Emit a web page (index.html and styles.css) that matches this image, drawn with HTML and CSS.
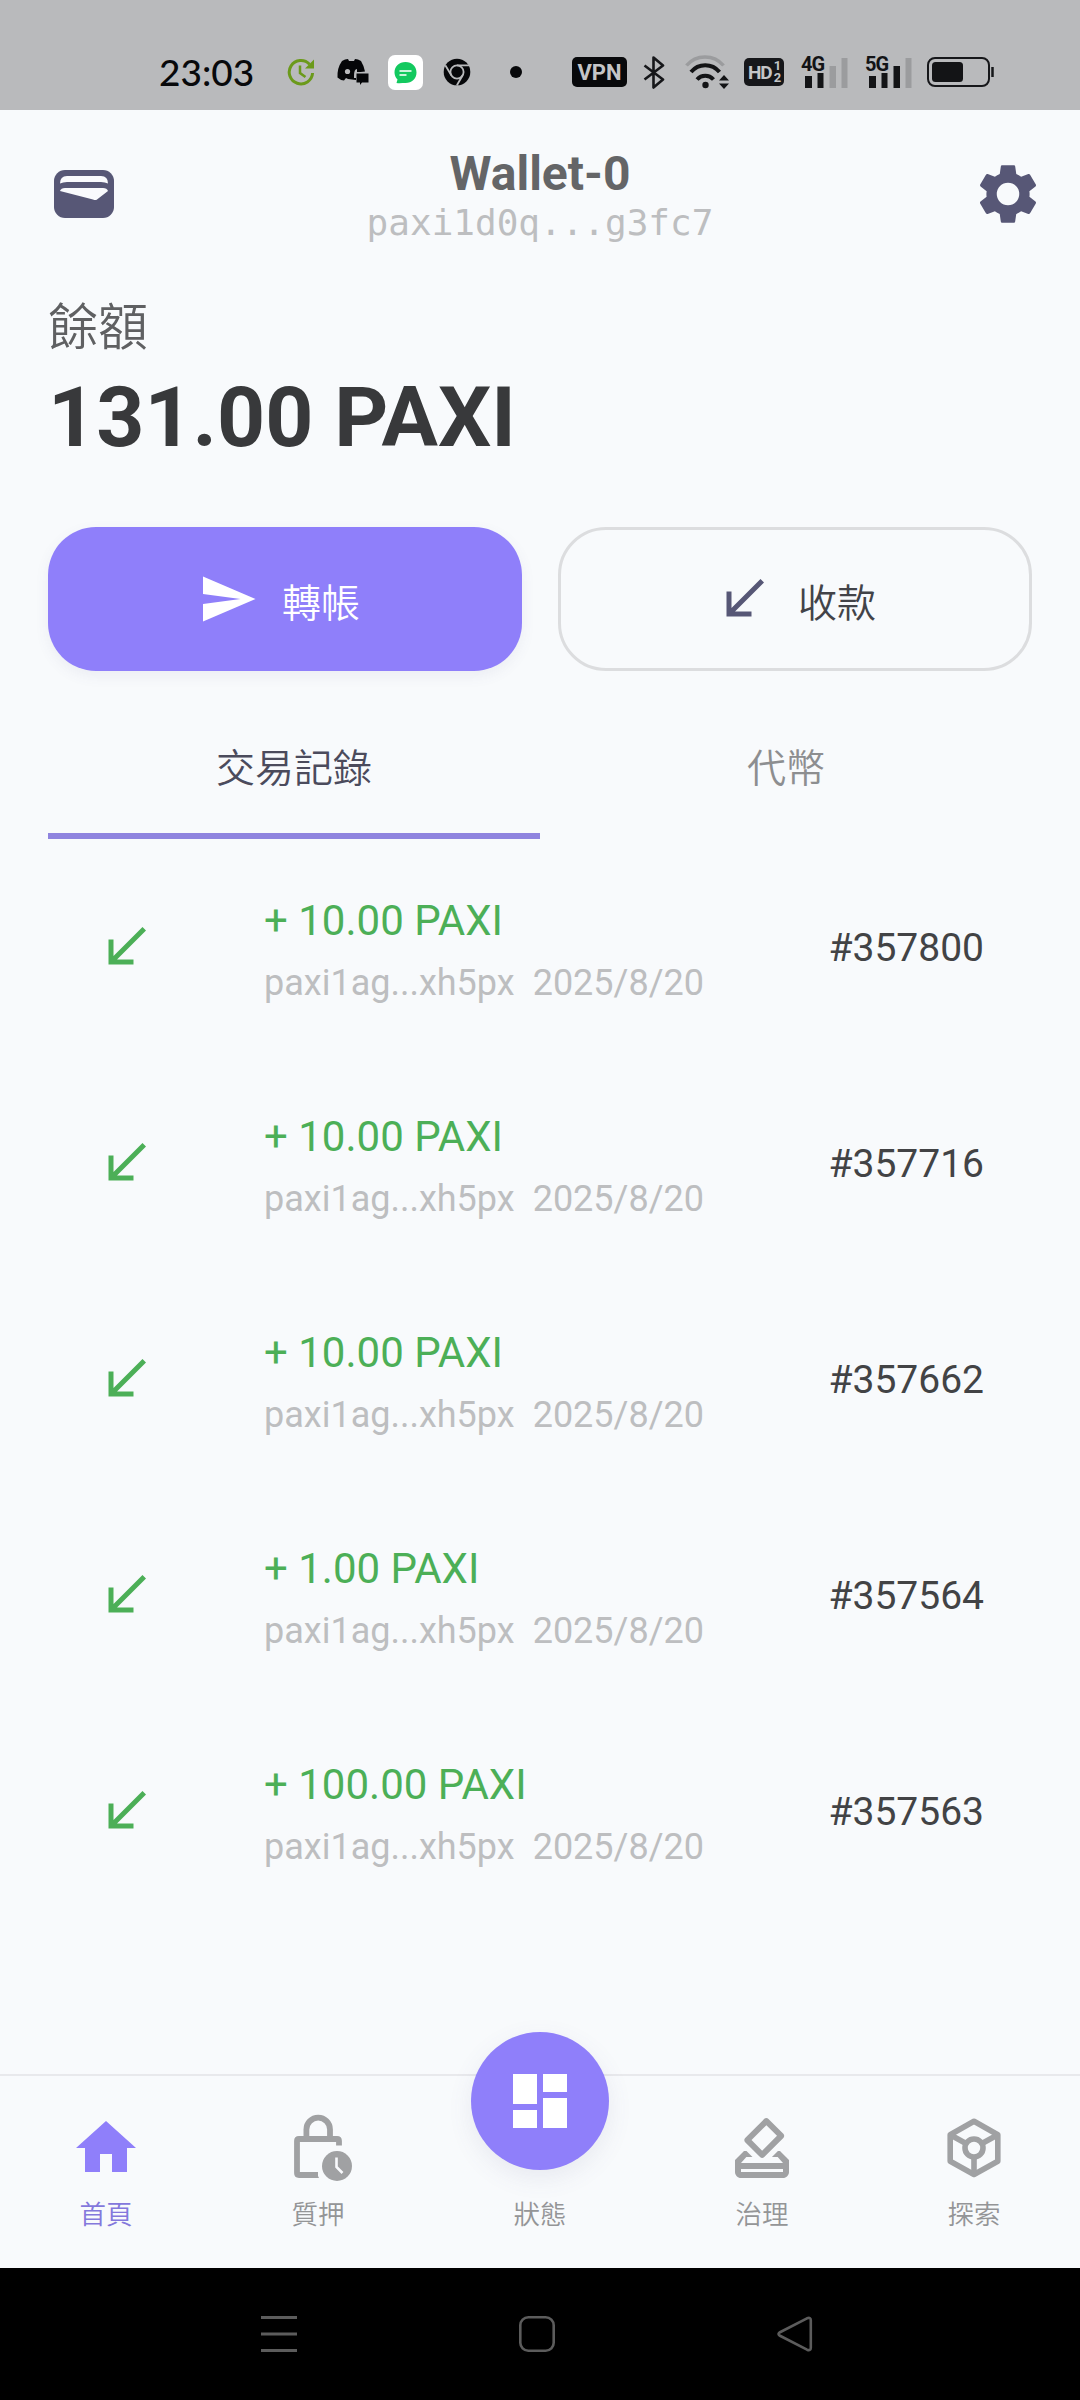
FILE: index.html
```html
<!DOCTYPE html>
<html lang="zh-Hant">
<head>
<meta charset="utf-8">
    <title>Wallet-0</title>
    <link rel="stylesheet" href="styles.css">
</head>
<body>
    <div id="statusbar">
        <span class="time">23:03</span>
        <div class="notices">
            <span><svg width="28" height="28" viewBox="0 0 28 28" fill="none" stroke="#6b9a1b" stroke-width="3"><path d="M22.5 6.2A11.7 11.7 0 1 0 25.6 15"/><path d="M13 7.500v7.500l5.500 4" stroke-width="2.500"/><path d="M18 10.500h9V1.500z" fill="#6b9a1b" stroke="none"/></svg></span>
            <span><svg width="32" height="28" viewBox="0 0 32 28"><path d="M5 3q3-2 6-2l1 2h5l1-2q3 0 6 2 3 5 4 10.500l-9 1V22l-8-1-2-1-2 2.500Q3 22 .5 19.500 0 10 5 3z" fill="#050608"/><circle cx="10.500" cy="13.500" r="2.600" fill="#b9babc"/><path d="M17 18q0-7 3-7v3h9v2h-9v4h-3z" fill="#b9babc"/><path d="M19.500 15.500h12v9H25L23 27v-2.500h-3.500z" fill="#050608"/></svg></span>
            <span><svg width="35" height="35" viewBox="0 0 35 35"><rect width="35" height="35" rx="7" fill="#fff"/><path d="M17.500 7C24 7 28.500 11.500 28.500 17.500S24 28 17.500 28c-3 0-6 .5-9 0l1-3.500C7.500 22.500 6.500 20 6.500 17.500 6.500 11.500 11 7 17.500 7z" fill="#13c95f"/><path d="M11.500 16h12M11.500 20h7" stroke="#c9f4da" stroke-width="1.800"/></svg></span>
            <span><svg width="28" height="28" viewBox="0 0 28 28"><circle cx="14" cy="14" r="13.300" fill="#07080a"/><circle cx="14" cy="14" r="6.600" fill="none" stroke="#b9babc" stroke-width="1.800"/><path d="M14 7.400h12M8.300 17.300l-6-10M19.700 17.300l-5.800 10" stroke="#b9babc" stroke-width="1.800"/></svg></span>
            <span class="last"><i class="dot"></i></span>
        </div>
        <div class="system">
            <b class="vpn">VPN</b>
            <svg class="bt" width="22" height="33" viewBox="0 0 22 33" fill="none" stroke="#16171a" stroke-width="2.600" stroke-linejoin="round"><path d="M1.500 9.500L20 23.500l-9.500 8V1.500l9.500 8L1.500 23.500"/></svg>
            <svg class="wifi" width="45" height="34" viewBox="0 0 45 34" fill="none"><path d="M1.500 10.500C11-1 29-1 38.500 10.500" stroke="#9b9c9e" stroke-width="3.500"/><path d="M6 17C13.500 8 27 8 34.500 17M12 24.500c4.500-5 12-5 16.500 0" stroke="#131416" stroke-width="4"/><circle cx="20.500" cy="30" r="3.200" fill="#131416"/><path d="M34 25.500h10l-5-5.500zM34 28.500h10l-5 5.500z" fill="#131416"/></svg>
            <b class="hd">HD<small>1<br>2</small></b>
            <div class="signal">
                <b>4G</b>
                <svg width="46" height="32" viewBox="0 0 46 32" fill="#131416"><rect x="3" y="20" width="7" height="12"/><rect x="15.500" y="17" width="6" height="15"/><rect x="27.500" y="10" width="6.500" height="22" fill="#9b9c9e"/><rect x="39.500" y="2" width="6" height="30" fill="#9b9c9e"/></svg>
            </div>
            <div class="signal">
                <b>5G</b>
                <svg width="46" height="32" viewBox="0 0 46 32" fill="#131416"><rect x="3" y="20" width="7" height="12"/><rect x="15.500" y="17" width="6" height="15"/><rect x="27.500" y="10" width="6.500" height="22"/><rect x="39.500" y="2" width="6" height="30" fill="#9b9c9e"/></svg>
            </div>
            <svg class="battery" width="68" height="30" viewBox="0 0 68 30"><rect x="1" y="1" width="61" height="28" rx="7" fill="none" stroke="#16171a" stroke-width="2"/><rect x="5" y="5" width="31" height="20" rx="3.500" fill="#131416"/><path d="M65.500 10v10" stroke="#16171a" stroke-width="2.500"/></svg>
        </div>
    </div>

    <div id="header">
        <svg width="60" height="48" viewBox="0 0 60 48"><rect width="60" height="48" rx="11" fill="#575776"/><path d="M6 13.500q0-7.500 7-7.500h34q7 0 7 7.500-3-1.500-7-1.500H13q-4 0-7 1.500zM6 21q1-3 5-3h38q4 0 5 3L43 29.500q-1.500 1-4 0z" fill="#f9fafd"/></svg>
        <div class="account">
            <div class="name">Wallet-0</div>
            <div class="address">paxi1d0q...g3fc7</div>
        </div>
        <svg width="72" height="72" viewBox="0 0 24 24" fill="#575776"><path d="M19.140 12.940c.04-.3.060-.61.060-.94 0-.32-.020-.64-.070-.94l2.030-1.580c.18-.14.230-.41.120-.61l-1.920-3.320c-.12-.22-.37-.29-.59-.22l-2.390.96c-.5-.38-1.030-.7-1.620-.94l-.36-2.540c-.04-.24-.24-.41-.48-.41h-3.840c-.24 0-.43.170-.47.410l-.36 2.540c-.59.240-1.130.570-1.620.940l-2.390-.96c-.22-.08-.47 0-.59.220L2.740 8.870c-.12.210-.08.470.120.610l2.030 1.580c-.05.300-.09.630-.09.940s.02.640.070.940l-2.030 1.580c-.18.140-.23.410-.12.610l1.920 3.320c.12.220.37.290.59.220l2.390-.96c.5.380 1.030.7 1.620.940l.36 2.540c.05.240.24.410.48.410h3.840c.24 0 .44-.17.470-.41l.36-2.540c.59-.24 1.130-.56 1.620-.94l2.390.96c.22.080.47 0 .59-.22l1.920-3.320c.12-.22.070-.47-.12-.61l-2.010-1.580zM12 15.750a3.750 3.750 0 1 1 0-7.500 3.750 3.750 0 0 1 0 7.500z"/></svg>
    </div>

    <div id="balance">
        <div class="label">餘額</div>
        <div class="total">131.00 PAXI</div>
    </div>

    <div id="actions">
        <a class="btn send"><svg width="60" height="60" viewBox="0 0 24 24" fill="#fff"><path d="M2 3v7l15 2-15 2v7l21-9z"/></svg><span>轉帳</span></a>
        <a class="btn receive"><svg width="60" height="60" viewBox="0 0 24 24" fill="#575776"><path d="M20 5.410L18.590 4 7 15.590V9H5v10h10v-2H8.410z"/></svg><span>收款</span></a>
    </div>

    <div id="tabs">
        <a class="tab active">交易記錄</a>
        <a class="tab">代幣</a>
    </div>

    <div id="list">
        <div class="row">
            <svg width="60" height="60" viewBox="0 0 24 24"><path d="M20 5.410L18.590 4 7 15.590V9H5v10h10v-2H8.410z"/></svg>
            <div class="info"><div class="amount">+ 10.00 PAXI</div><div class="from">paxi1ag...xh5px<span>2025/8/20</span></div></div>
            <div class="block">#357800</div>
        </div>
        <div class="row">
            <svg width="60" height="60" viewBox="0 0 24 24"><path d="M20 5.410L18.590 4 7 15.590V9H5v10h10v-2H8.410z"/></svg>
            <div class="info"><div class="amount">+ 10.00 PAXI</div><div class="from">paxi1ag...xh5px<span>2025/8/20</span></div></div>
            <div class="block">#357716</div>
        </div>
        <div class="row">
            <svg width="60" height="60" viewBox="0 0 24 24"><path d="M20 5.410L18.590 4 7 15.590V9H5v10h10v-2H8.410z"/></svg>
            <div class="info"><div class="amount">+ 10.00 PAXI</div><div class="from">paxi1ag...xh5px<span>2025/8/20</span></div></div>
            <div class="block">#357662</div>
        </div>
        <div class="row">
            <svg width="60" height="60" viewBox="0 0 24 24"><path d="M20 5.410L18.590 4 7 15.590V9H5v10h10v-2H8.410z"/></svg>
            <div class="info"><div class="amount">+ 1.00 PAXI</div><div class="from">paxi1ag...xh5px<span>2025/8/20</span></div></div>
            <div class="block">#357564</div>
        </div>
        <div class="row">
            <svg width="60" height="60" viewBox="0 0 24 24"><path d="M20 5.410L18.590 4 7 15.590V9H5v10h10v-2H8.410z"/></svg>
            <div class="info"><div class="amount">+ 100.00 PAXI</div><div class="from">paxi1ag...xh5px<span>2025/8/20</span></div></div>
            <div class="block">#357563</div>
        </div>
    </div>

    <div id="nav">
        <a class="item active">
            <svg width="72" height="72" viewBox="0 0 24 24" fill="#8f7ffa"><path d="M10 20v-6h4v6h5v-8h3L12 3 2 12h3v8z"/></svg>
            <span>首頁</span>
        </a>
        <a class="item">
            <svg width="72" height="72" viewBox="0 0 72 72" fill="none" stroke="#a0a1a3" stroke-width="5.800"><path d="M24.400 27V17.500a11.800 11.800 0 0 1 23.600 0V27"/><path d="M57 33.500V29q0-2-2-2H17q-2 0-2 2v32q0 2 2 2h19"/><path d="M34 60l3 6h-4z" fill="#a0a1a3" stroke="none"/><circle cx="55" cy="54" r="15" fill="#a0a1a3" stroke="none"/><path d="M54.500 45.500v9.500l6 6" stroke="#f9fafd" stroke-width="2.600"/></svg>
            <span>質押</span>
        </a>
        <a class="item middle">
            <div class="circle"><svg width="72" height="72" viewBox="0 0 24 24" fill="#fff"><path d="M3 13h8V3H3v10zm0 8h8v-6H3v6zm10 0h8V11h-8v10zm0-18v6h8V3h-8z"/></svg></div>
            <span>狀態</span>
        </a>
        <a class="item">
            <svg width="72" height="72" viewBox="0 0 24 24" fill="#a0a1a3"><path d="M18 13h-.68l-2 2h1.910L19 17H5l1.780-2h2.050l-2-2H6l-3 3v4c0 1.100.89 2 1.990 2H19c1.100 0 2-.89 2-2v-4l-3-3zm1 7H5v-1h14v1zm-7.660-4.980c.39.390 1.020.390 1.410 0l6.360-6.360c.39-.39.390-1.020 0-1.410L14.160 2.300c-.38-.4-1.010-.4-1.400-.010L6.390 8.660c-.39.390-.39 1.020 0 1.410l4.950 4.950zm2.120-10.610L17 7.950l-4.950 4.950-3.540-3.540 4.950-4.950z"/></svg>
            <span>治理</span>
        </a>
        <a class="item">
            <svg width="72" height="72" viewBox="0 0 72 72" fill="none" stroke="#a0a1a3" stroke-width="5.600" stroke-linejoin="round"><path d="M36 9.300l23.800 13.400v26.600L36 62.500 12.200 49.300V22.700z"/><circle cx="36" cy="36" r="9"/><path d="M12.200 22.700L28 31.500M59.800 22.700L44 31.500M36 45v17"/></svg>
            <span>探索</span>
        </a>
    </div>

    <div id="softkeys">
        <svg width="36" height="36" viewBox="0 0 36 36" stroke="#5c5c5c" stroke-width="3"><path d="M0 1.500h36M0 18h36M0 34.500h36"/></svg>
        <svg width="36" height="36" viewBox="0 0 36 36" fill="none" stroke="#5c5c5c" stroke-width="2.600"><rect x="1.300" y="1.300" width="33.400" height="33.400" rx="8"/></svg>
        <svg width="36" height="36" viewBox="0 0 36 36" fill="none" stroke="#5c5c5c" stroke-width="2.600" stroke-linejoin="round"><path d="M2.500 16.500L30 2.300q3.800-1.500 3.800 2v27.400q0 3.500-3.800 2L2.500 19.500q-2-1.500 0-3z"/></svg>
    </div>
</body>
</html>
```

FILE: styles.css
```css
body {
    margin: 0;
    height: 2400px;
    display: flex;
    flex-direction: column;
    background: #f8fafc;
    font-family: Roboto, "Noto Sans CJK TC", sans-serif;
    overflow: hidden;
}
svg {
    display: block;
    flex: none;
}

/* phone status bar */
#statusbar {
    height: 110px;
    box-sizing: border-box;
    padding: 34px 85px 0 159px;
    background: #b9babc;
    display: flex;
    align-items: center;
    color: #08090b;
}
.time {
    width: 116px;
    font-family: Lato, sans-serif;
    font-size: 37px;
    line-height: 40px;
    font-weight: 500;
}
.notices {
    display: flex;
}
.notices span {
    width: 52px;
    display: flex;
    align-items: center;
    justify-content: center;
}
.notices .last {
    width: 66px;
}
.dot {
    width: 12px;
    height: 12px;
    border-radius: 6px;
    background: #08090b;
}
.system {
    margin-left: auto;
    display: flex;
    align-items: center;
}
.vpn {
    width: 55px;
    height: 30px;
    border-radius: 5px;
    background: #08090b;
    color: #c4c5c7;
    font-size: 22px;
    line-height: 31px;
    text-align: center;
}
.bt {
    margin-left: 16px;
}
.wifi {
    margin-left: 20px;
}
.hd {
    width: 40px;
    height: 28px;
    margin-left: 14px;
    border-radius: 5px;
    background: #16171a;
    color: #c4c5c7;
    display: flex;
    align-items: center;
    justify-content: center;
    font-size: 19px;
    letter-spacing: -1px;
}
.hd small {
    font-size: 13px;
    line-height: 12px;
    margin-left: 2px;
}
.signal {
    position: relative;
    margin-left: 18px;
}
.signal b {
    position: absolute;
    left: -1px;
    top: -1px;
    font-size: 20px;
    line-height: 18px;
    letter-spacing: -1px;
    color: #131416;
}
.battery {
    margin-left: 15px;
}

/* wallet name */
#header {
    height: 168px;
    padding: 0 36px 0 54px;
    display: flex;
    align-items: center;
    justify-content: space-between;
}
.account {
    text-align: center;
    padding-top: 2px;
    padding-right: 6px;
}
.name {
    font-size: 48px;
    line-height: 56px;
    font-weight: bold;
    color: #646567;
}
.address {
    font-family: "DejaVu Sans Mono", monospace;
    font-size: 36px;
    line-height: 42px;
    color: #bdbec0;
}

#balance {
    padding: 20px 50px 0 48px;
}
.label {
    font-size: 50px;
    line-height: 60px;
    font-weight: 350;
    color: #5f6062;
}
.total {
    margin-top: 10px;
    font-size: 84px;
    line-height: 100px;
    font-weight: bold;
    color: #38393b;
}

#actions {
    display: flex;
    gap: 36px;
    margin: 59px 48px 0;
}
.btn {
    width: 474px;
    height: 144px;
    box-sizing: border-box;
    border-radius: 48px;
    display: flex;
    align-items: center;
    justify-content: center;
    gap: 24px;
    font-size: 39px;
    line-height: 48px;
    font-weight: 350;
}
.btn span {
    margin-top: 9px;
}
.send {
    background: #8f7ffa;
    color: #fff;
    padding-right: 12px;
    box-shadow: 0 5px 14px rgba(90, 90, 140, 0.08);
}
.receive {
    border: 3px solid #dcdddf;
    color: #424348;
}

#tabs {
    display: flex;
    margin: 33px 48px 0;
}
.tab {
    flex: 1;
    height: 129px;
    border-bottom: 6px solid transparent;
    line-height: 130px;
    text-align: center;
    font-size: 39px;
    font-weight: 350;
    color: #8d8e90;
}
.tab.active {
    color: #4b4b5c;
    border-color: #8f84df;
}

/* transactions */
.row {
    height: 216px;
    margin: 0 48px;
    padding: 0 48px;
    display: flex;
    align-items: center;
}
.row svg {
    fill: #4caf57;
}
.info {
    margin-left: 108px;
    padding-top: 9px;
    flex: 1;
    line-height: 62px;
}
.amount {
    font-size: 42px;
    color: #4caf57;
}
.from {
    font-size: 36px;
    color: #bdbec0;
}
.from span {
    margin-left: 18px;
}
.block {
    padding-top: 2px;
    font-size: 39px;
    color: #424345;
}

/* bottom menu */
#nav {
    height: 194px;
    box-sizing: border-box;
    margin-top: auto;
    padding-top: 36px;
    border-top: 2px solid #e8e9ec;
    display: flex;
}
.item {
    width: 212px;
    display: flex;
    flex-direction: column;
    align-items: center;
    font-size: 26.5px;
    line-height: 30px;
    font-weight: 350;
    color: #949597;
}
.item span {
    margin-top: 16px;
}
.item.active {
    color: #8478dc;
}
.middle {
    width: 232px;
}
.circle {
    width: 138px;
    height: 138px;
    margin-top: -80px;
    margin-bottom: 14px;
    border-radius: 50%;
    background: #8f7ffa;
    box-shadow: 0 8px 24px rgba(90, 90, 140, 0.1);
    display: flex;
    align-items: center;
    justify-content: center;
}

/* android buttons */
#softkeys {
    height: 132px;
    background: #000;
    display: flex;
    align-items: center;
    justify-content: center;
    gap: 222px;
    padding-right: 6px;
}
```
